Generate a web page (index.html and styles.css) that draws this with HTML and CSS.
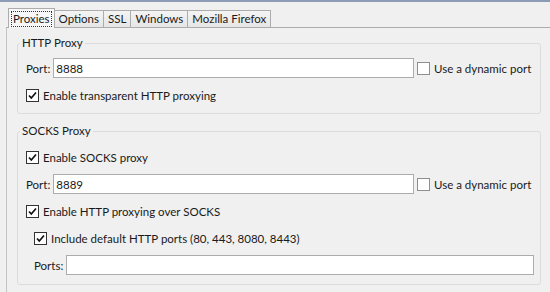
FILE: index.html
```html
<!DOCTYPE html>
<html lang="en">
<head>
    <meta charset="UTF-8">
    <title>Options</title>
    <link rel="stylesheet" href="styles.css">
</head>
<body>
    <div class="tabs">
        <div class="tab active"><span class="focus">Proxies</span></div>
        <div class="tab">Options</div>
        <div class="tab">SSL</div>
        <div class="tab">Windows</div>
        <div class="tab">Mozilla Firefox</div>
    </div>

    <div class="panel">
        <fieldset class="group">
            <legend>HTTP Proxy</legend>
            <div class="rows">
                <div class="row">
                    <span class="field-label">Port:</span>
                    <input class="text" type="text" value="8888">
                    <span class="check dynamic"><span class="box"></span>Use a dynamic port</span>
                </div>
                <div class="row">
                    <span class="check"><span class="box checked"></span>Enable transparent HTTP proxying</span>
                </div>
            </div>
        </fieldset>

        <fieldset class="group socks">
            <legend>SOCKS Proxy</legend>
            <div class="rows">
                <div class="row">
                    <span class="check"><span class="box checked"></span>Enable SOCKS proxy</span>
                </div>
                <div class="row">
                    <span class="field-label">Port:</span>
                    <input class="text" type="text" value="8889">
                    <span class="check dynamic"><span class="box"></span>Use a dynamic port</span>
                </div>
                <div class="row">
                    <span class="check"><span class="box checked"></span>Enable HTTP proxying over SOCKS</span>
                </div>
                <div class="row sub">
                    <span class="check"><span class="box checked"></span>Include default HTTP ports (80, 443, 8080, 8443)</span>
                </div>
                <div class="row sub">
                    <span class="field-label">Ports:</span>
                    <input class="text" type="text" value="">
                </div>
            </div>
        </fieldset>
    </div>
</body>
</html>
```

FILE: styles.css
```css
body {
    margin: 0;
    height: 292px;
    box-sizing: border-box;
    overflow: hidden;
    display: flex;
    flex-direction: column;
    background-color: #f0f0f0;
    border-top: 2px solid #8d9cb6;
    font-family: Lato, "Liberation Sans", sans-serif;
    font-size: 11.5px;
    color: #1a1a1a;
}
.tabs {
    display: flex;
    align-items: flex-end;
    padding-left: 8px;
    margin-top: 6px;
    height: 19px;
    flex-shrink: 0;
    position: relative;
    z-index: 1;
}
.tab {
    height: 17px;
    line-height: 16px;
    padding: 0 4px;
    border: 1px solid #acacac;
    border-bottom: none;
    border-left: none;
    background: linear-gradient(#f4f4f4, #e6e6e6);
    box-sizing: border-box;
}
.tab.active {
    height: 20px;
    margin-bottom: -1px;
    padding: 2px 2px 0;
    border-left: 1px solid #acacac;
    background: #f7f7f7;
}
.focus {
    display: block;
    line-height: 14px;
    padding: 0 1px;
    border: 1px dotted #333;
}
.panel {
    flex: 1;
    margin-left: 6px;
    padding: 0 9px 0 10px;
    border-left: 1px solid #c4c4c4;
    border-top: 1px solid #acacac;
}
.group {
    margin: 8px 0 0;
    padding: 0 6px 8px 8px;
    border: 1px solid #dcdcdc;
    border-radius: 3px;
    min-width: 0;
}
.group.socks {
    margin-top: 10px;
    padding-bottom: 9px;
}
legend {
    padding: 0 2px;
    margin-left: -6px;
    line-height: 14px;
}
.rows {
    display: flex;
    flex-direction: column;
    gap: 7px;
    padding-top: 8px;
}
.socks .rows {
    padding-top: 9px;
}
.row {
    display: flex;
    align-items: center;
    height: 20px;
}
.row.sub {
    padding-left: 8px;
}
.field-label {
    margin-right: 3px;
}
.text {
    flex: 1;
    min-width: 0;
    height: 20px;
    box-sizing: border-box;
    margin: 0;
    padding: 0 2px;
    border: 1px solid #acacac;
    background: #fff;
    font: inherit;
    color: inherit;
    outline: none;
}
.check {
    display: flex;
    align-items: center;
    gap: 4px;
    white-space: nowrap;
}
.dynamic {
    width: 117px;
    margin-left: 3px;
    flex-shrink: 0;
}
.box {
    width: 13px;
    height: 13px;
    box-sizing: border-box;
    border: 1px solid #8f8f8f;
    background: #fff;
    flex-shrink: 0;
}
.box.checked {
    border-color: #333;
    background: #fff url("data:image/svg+xml,%3Csvg xmlns='http://www.w3.org/2000/svg' width='11' height='11'%3E%3Cpath d='M2 5.5l2.3 2.5L9 2.5' fill='none' stroke='%23111' stroke-width='1.7'/%3E%3C/svg%3E") no-repeat center;
}
```
